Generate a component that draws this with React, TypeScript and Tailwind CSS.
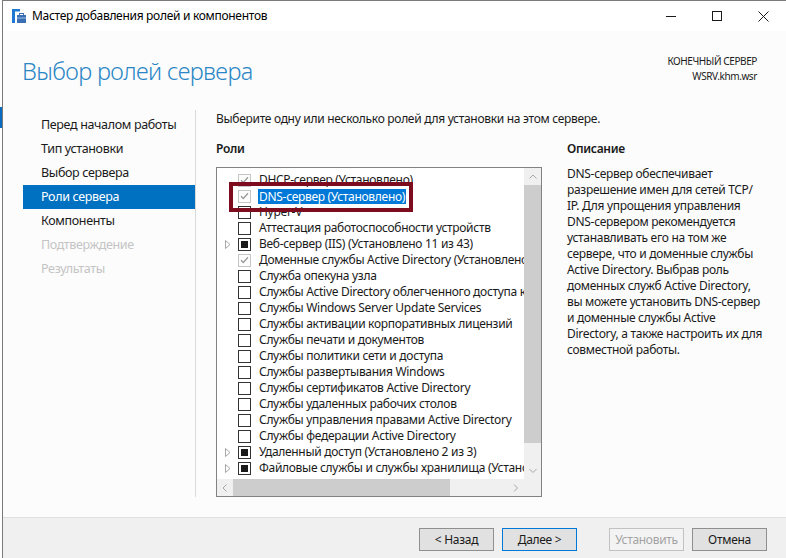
import type { ReactNode } from "react";

type Check = "on" | "off" | "mixed";

type Role = {
  label: string;
  state: Check;
  expand?: boolean;
  selected?: boolean;
};

const roles: Role[] = [
  { label: "DHCP-сервер (Установлено)", state: "on" },
  { label: "DNS-сервер (Установлено)", state: "on", selected: true },
  { label: "Hyper-V", state: "off" },
  { label: "Аттестация работоспособности устройств", state: "off" },
  { label: "Веб-сервер (IIS) (Установлено 11 из 43)", state: "mixed", expand: true },
  { label: "Доменные службы Active Directory (Установлено)", state: "on" },
  { label: "Служба опекуна узла", state: "off" },
  { label: "Службы Active Directory облегченного доступа к каталогам", state: "off" },
  { label: "Службы Windows Server Update Services", state: "off" },
  { label: "Службы активации корпоративных лицензий", state: "off" },
  { label: "Службы печати и документов", state: "off" },
  { label: "Службы политики сети и доступа", state: "off" },
  { label: "Службы развертывания Windows", state: "off" },
  { label: "Службы сертификатов Active Directory", state: "off" },
  { label: "Службы удаленных рабочих столов", state: "off" },
  { label: "Службы управления правами Active Directory", state: "off" },
  { label: "Службы федерации Active Directory", state: "off" },
  { label: "Удаленный доступ (Установлено 2 из 3)", state: "mixed", expand: true },
  { label: "Файловые службы и службы хранилища (Установлено 12 из 12)", state: "mixed", expand: true },
];

const steps = [
  { label: "Перед началом работы" },
  { label: "Тип установки" },
  { label: "Выбор сервера" },
  { label: "Роли сервера", active: true },
  { label: "Компоненты" },
  { label: "Подтверждение", disabled: true },
  { label: "Результаты", disabled: true },
];

const description = [
  "DNS-сервер обеспечивает",
  "разрешение имен для сетей TCP/",
  "IP. Для упрощения управления",
  "DNS-сервером рекомендуется",
  "устанавливать его на том же",
  "сервере, что и доменные службы",
  "Active Directory. Выбрав роль",
  "доменных служб Active Directory,",
  "вы можете установить DNS-сервер",
  "и доменные службы Active",
  "Directory, а также настроить их для",
  "совместной работы.",
];

function CheckBox({ state }: { state: Check }) {
  if (state === "on") {
    return (
      <span className="flex h-[13px] w-[13px] shrink-0 items-center justify-center border border-[#c6c6c6] bg-[#fcfcfc]">
        <svg width="9" height="8" viewBox="0 0 9 8">
          <path d="M1 4.2L3.3 6.5L8 1.3" fill="none" stroke="#9b9b9b" strokeWidth="1.3" />
        </svg>
      </span>
    );
  }
  if (state === "mixed") {
    return (
      <span className="flex h-[13px] w-[13px] shrink-0 items-center justify-center border border-[#333333] bg-white">
        <span className="h-[7px] w-[7px] bg-[#1a1a1a]" />
      </span>
    );
  }
  return <span className="h-[13px] w-[13px] shrink-0 border border-[#333333] bg-white" />;
}

function Chevron({ dir }: { dir: "up" | "down" | "left" | "right" }) {
  const d = {
    up: "M0.5 4.5L4 1L7.5 4.5",
    down: "M0.5 1L4 4.5L7.5 1",
    left: "M4.5 0.5L1 4L4.5 7.5",
    right: "M1 0.5L4.5 4L1 7.5",
  }[dir];
  const vertical = dir === "up" || dir === "down";
  return (
    <svg width={vertical ? 8 : 6} height={vertical ? 6 : 8} viewBox={vertical ? "0 0 8 6" : "0 0 6 8"}>
      <path d={d} fill="none" stroke="#a6a6a6" strokeWidth="1" />
    </svg>
  );
}

function RoleRow({ role }: { role: Role }) {
  return (
    <div className="flex h-[16px] items-center whitespace-nowrap">
      <span className="flex w-[21px] shrink-0 justify-end pr-[7px]">
        {role.expand && (
          <svg width="6" height="9" viewBox="0 0 6 9">
            <path d="M0.5 0.5L5 4.5L0.5 8.5Z" fill="none" stroke="#a6a6a6" strokeWidth="1" />
          </svg>
        )}
      </span>
      <CheckBox state={role.state} />
      <span
        className={
          role.selected
            ? "ml-[7px] h-[15px] bg-[#0078d7] px-[1px] leading-[15px] text-white"
            : "ml-[8px] leading-[16px]"
        }
      >
        {role.label}
      </span>
    </div>
  );
}

function Button({ children, variant }: { children: ReactNode; variant?: "default" | "disabled" }) {
  const tone =
    variant === "default"
      ? "border-[#0078d7] bg-[#e1e1e1] text-[#1a1a1a]"
      : variant === "disabled"
        ? "border-[#c2c2c2] bg-[#f3f3f3] text-[#a3a3a3]"
        : "border-[#8f8f8f] bg-[#e1e1e1] text-[#1a1a1a]";
  return (
    <div className={`flex h-[23px] w-[75px] items-center justify-center border text-[12px] ${tone}`}>
      {children}
    </div>
  );
}

function WizardIcon() {
  return (
    <svg width="14" height="15" viewBox="0 0 14 15">
      <rect x="0" y="0" width="3" height="14" fill="#1f78d1" />
      <rect x="0" y="0" width="8" height="2.5" fill="#1f78d1" />
      <rect x="5" y="6" width="9" height="8" fill="#3b6fb4" />
      <rect x="7.5" y="4.5" width="4" height="2" fill="none" stroke="#3b6fb4" strokeWidth="1" />
      <rect x="5" y="8.5" width="9" height="1" fill="#9cc0e8" />
    </svg>
  );
}

export default function App() {
  return (
    <div className="relative h-[558px] w-[786px] overflow-hidden bg-white font-['Noto_Sans',sans-serif] tracking-[-0.3px] text-[#1a1a1a]">
      <div className="flex h-full">
        <div className="flex w-[2px] shrink-0 flex-col">
          <div className="mt-[107px] h-[21px] bg-[#0a6cc0]" />
        </div>

        <div className="flex min-w-0 flex-1 flex-col border-l border-t border-[#7a7a7a]">
          {/* title bar */}
          <div className="flex h-[30px] shrink-0 items-center bg-white">
            <div className="flex items-center pl-[9px]">
              <WizardIcon />
              <span className="ml-[6px] text-[12px] text-black">Мастер добавления ролей и компонентов</span>
            </div>
            <div className="ml-auto flex h-full">
              <div className="flex w-[46px] items-center justify-center">
                <svg width="10" height="1" viewBox="0 0 10 1">
                  <rect width="10" height="1" fill="#1a1a1a" />
                </svg>
              </div>
              <div className="flex w-[46px] items-center justify-center">
                <svg width="10" height="10" viewBox="0 0 10 10">
                  <rect x="0.5" y="0.5" width="9" height="9" fill="none" stroke="#1a1a1a" strokeWidth="1" />
                </svg>
              </div>
              <div className="flex w-[46px] items-center justify-center">
                <svg width="11" height="11" viewBox="0 0 11 11">
                  <path d="M0.5 0.5L10.5 10.5M10.5 0.5L0.5 10.5" stroke="#1a1a1a" strokeWidth="1" />
                </svg>
              </div>
            </div>
          </div>

          {/* content */}
          <div className="flex flex-1 flex-col bg-[#fcfcfc] pb-[20px]">
            <div className="flex h-[79px] shrink-0 justify-between">
              <h1 className="pl-[19px] pt-[25px] text-[23.5px] font-light leading-[30px] tracking-[-0.6px] text-[#2a86c5]">
                Выбор ролей сервера
              </h1>
              <div className="pr-[29px] pt-[23px] text-right text-[10px] leading-[15px] tracking-[-0.4px] text-[#1a1a1a]">
                <div>КОНЕЧНЫЙ СЕРВЕР</div>
                <div>WSRV.khm.wsr</div>
              </div>
            </div>

            <div className="flex flex-1">
              <nav className="w-[193px] shrink-0 border-r border-[#dadada] pl-[20px] pt-[3px] text-[12.5px] tracking-[-0.35px]">
                {steps.map((s) => (
                  <div
                    key={s.label}
                    className={
                      s.active
                        ? "h-[24px] bg-[#0070c0] pl-[18px] leading-[24px] text-white"
                        : s.disabled
                          ? "h-[24px] pl-[18px] leading-[24px] text-[#c4c4c4]"
                          : "h-[24px] pl-[18px] leading-[24px] text-[#1a1a1a]"
                    }
                  >
                    {s.label}
                  </div>
                ))}
              </nav>

              <main className="min-w-0 flex-1 pl-[20px] pt-[1px] text-[12px]">
                <p className="leading-[16px]">Выберите одну или несколько ролей для установки на этом сервере.</p>
                <div className="mt-[14px] flex gap-[25px]">
                  <div className="w-[326px] shrink-0">
                    <div className="font-semibold leading-[16px]">Роли</div>
                    <div className="mt-[10px] flex h-[330px] flex-col border border-[#828282] bg-white">
                      <div className="flex min-h-0 flex-1">
                        <div className="min-w-0 flex-1 overflow-hidden pt-[4px]">
                          {roles.map((r) => (
                            <RoleRow key={r.label} role={r} />
                          ))}
                        </div>
                        <div className="flex w-[17px] shrink-0 flex-col bg-[#f0f0f0]">
                          <div className="flex h-[17px] items-center justify-center">
                            <Chevron dir="up" />
                          </div>
                          <div className="h-[258px] bg-[#cdcdcd]" />
                          <div className="flex-1" />
                          <div className="flex h-[17px] items-center justify-center">
                            <Chevron dir="down" />
                          </div>
                        </div>
                      </div>
                      <div className="flex h-[17px] shrink-0 bg-[#f0f0f0]">
                        <div className="flex w-[16px] items-center justify-center">
                          <Chevron dir="left" />
                        </div>
                        <div className="w-[217px] bg-[#cdcdcd]" />
                        <div className="flex-1" />
                        <div className="flex w-[17px] items-center justify-center">
                          <Chevron dir="right" />
                        </div>
                        <div className="w-[17px]" />
                      </div>
                    </div>
                  </div>

                  <div className="w-[215px] shrink-0">
                    <div className="font-semibold leading-[16px]">Описание</div>
                    <div className="mt-[9px] leading-[16px]">
                      {description.map((line) => (
                        <div key={line} className="whitespace-nowrap">
                          {line}
                        </div>
                      ))}
                    </div>
                  </div>
                </div>
              </main>
            </div>
          </div>

          {/* footer */}
          <div className="flex h-[41px] shrink-0 justify-end border-t border-[#dfdfdf] bg-[#f0f0f0] pr-[19px] pt-[10px]">
            <Button>&lt; Назад</Button>
            <div className="ml-[8px]">
              <Button variant="default">Далее &gt;</Button>
            </div>
            <div className="ml-[32px]">
              <Button variant="disabled">Установить</Button>
            </div>
            <div className="ml-[8px]">
              <Button>Отмена</Button>
            </div>
          </div>
        </div>
      </div>

      <div className="absolute left-[229px] top-[182px] h-[30px] w-[184px] border-[4px] border-[#7d0c1f]" />
    </div>
  );
}
